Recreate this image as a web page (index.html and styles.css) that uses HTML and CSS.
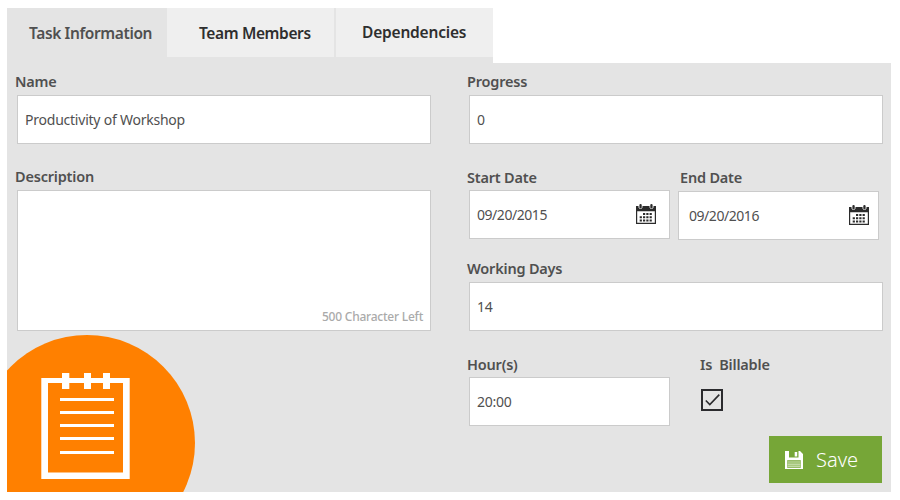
FILE: index.html
```html
<!DOCTYPE html>
<html lang="en">
<head>
<meta charset="utf-8">
<title>Task Information</title>
<link rel="stylesheet" href="styles.css">
</head>
<body>
<svg class="defs" aria-hidden="true">
  <symbol id="calendar" viewBox="0 0 20 20">
    <path fill="#2b2b2b" fill-rule="evenodd" d="M0 2H2.500V3.500Q4.500 6.500 6.500 3.500V2H13.500V3.500Q15.500 6.500 17.500 3.500V2H20V20H0ZM1.200 7.200V18.800H18.800V7.200Z"/>
    <rect x="3.400" y="0" width="2.300" height="4.600" rx="1.100" fill="#2b2b2b"/>
    <rect x="14.300" y="0" width="2.300" height="4.600" rx="1.100" fill="#2b2b2b"/>
    <path stroke="#2b2b2b" stroke-width="2" stroke-dasharray="2.200 1.100" d="M7 10H16.500M3.700 13.200H16.500M3.700 16.400H16.500"/>
  </symbol>
</svg>
<main class="task">
  <nav class="tabs">
    <a class="tab tab-active">Task Information</a>
    <a class="tab tab-team">Team Members</a>
    <a class="tab tab-deps">Dependencies</a>
  </nav>
  <form class="panel">
    <section class="column">
      <div class="field">
        <label class="label">Name</label>
        <div class="box">Productivity of Workshop</div>
      </div>
      <div class="field description">
        <label class="label">Description</label>
        <div class="box area"><span class="hint">500 Character Left</span></div>
      </div>
      <svg class="notepad" width="188" height="157" viewBox="7 335 188 157">
        <circle cx="87" cy="443" r="108" fill="#ff8000"/>
        <path fill="#fff" fill-rule="evenodd" d="M41.300 378H129.700V479H41.300ZM48 383V472.500H123V383Z"/>
        <path fill="#fff" d="M62 373h7.300v16H62zM84 373h7v16h-7zM103 373h7v16h-7z"/>
        <path stroke="#fff" stroke-width="3" d="M60 399.500H114M60 412.500H114M60 425.500H114M60 438.500H114M60 452.500H114"/>
      </svg>
    </section>
    <section class="column">
      <div class="field">
        <label class="label">Progress</label>
        <div class="box">0</div>
      </div>
      <div class="dates">
        <div class="field">
          <label class="label low">Start Date</label>
          <div class="box date">09/20/2015<svg width="20" height="20"><use href="#calendar"/></svg></div>
        </div>
        <div class="field end">
          <label class="label">End Date</label>
          <div class="box date">09/20/2016<svg width="20" height="20"><use href="#calendar"/></svg></div>
        </div>
      </div>
      <div class="field working">
        <label class="label">Working Days</label>
        <div class="box">14</div>
      </div>
      <div class="hours-row">
        <div class="field hours">
          <label class="label low">Hour(s)</label>
          <div class="box">20:00</div>
        </div>
        <div class="billable">
          <label class="label low">Is&nbsp; Billable</label>
          <svg class="check" width="22" height="22" viewBox="0 0 22 22" fill="none" stroke="#2b2b2e" stroke-width="2">
            <rect x="1" y="1" width="20" height="20"/>
            <path stroke-width="1.600" d="M4.800 11.500L8.800 15.600L18.300 5.600"/>
          </svg>
        </div>
      </div>
      <button class="save" type="button">
        <svg width="18" height="18" viewBox="0 0 18 18">
          <path fill="#fff" fill-rule="evenodd" d="M0 0H4V6.500H13.500V0H15L18 3V18H0ZM2.200 9.200V16.800H15.800V9.200Z"/>
          <path fill="#fff" d="M9.700 1h2.500v4.500H9.700z"/>
          <path stroke="#dcebc9" stroke-width="1.200" d="M2.500 11H15.500M2.500 13.100H15.500M2.500 15.200H15.500"/>
        </svg>
        <span>Save</span>
      </button>
    </section>
  </form>
</main>
</body>
</html>
```
FILE: styles.css
```css
* { box-sizing: border-box; }

body {
  margin: 0;
  background: #fff;
  color: #505050;
  font-family: "Noto Sans", "Open Sans", sans-serif;
}

.defs { display: none; }

.task { width: 884px; margin: 8px 0 0 7px; }

.tabs {
  display: flex;
  width: 486px;
  height: 55px;
  padding-bottom: 6px;
  background: #e4e4e4;
}

.tab {
  height: 49px;
  background: #efefef;
  color: #2e2e2e;
  font-size: 15.500px;
  font-weight: 600;
  letter-spacing: -0.380px;
  line-height: 50px;
  white-space: nowrap;
}

.tab-active { width: 160px; padding-left: 22px; background: #e4e4e4; color: #505050; }
.tab-team { width: 167px; padding-left: 32px; }
.tab-deps { width: 157px; margin-left: 2px; padding-left: 26px; letter-spacing: -0.200px; line-height: 48px; }

.panel {
  display: grid;
  grid-template-columns: 414px 414px;
  column-gap: 38px;
  height: 429px;
  padding: 8px 8px 0 10px;
  background: #e4e4e4;
}

.column { display: flex; flex-direction: column; align-items: flex-start; }

.field { width: 414px; }

.label {
  display: block;
  height: 24px;
  margin-left: -2px;
  font-size: 14.500px;
  font-weight: 600;
  letter-spacing: -0.200px;
  line-height: 20px;
  white-space: nowrap;
}

.low { line-height: 22px; }

.box {
  height: 49px;
  padding-left: 7px;
  border: 1px solid #cbcbcb;
  background: #fff;
  font-size: 14px;
  letter-spacing: -0.230px;
  line-height: 48px;
}

.description { margin-top: 22px; }

.area {
  display: flex;
  height: 141px;
  align-items: flex-end;
  justify-content: flex-end;
  padding: 0 7px 5px;
}

.hint { color: #aaa; font-size: 12px; font-weight: 500; line-height: 16px; }

.notepad { flex: none; margin: 4px 0 0 -10px; }

.dates { display: flex; gap: 8px; margin-top: 22px; }
.dates .field { width: 201px; }
.end { padding-top: 1px; }
.end .label { margin-left: 2px; }
.end .box { padding-left: 10px; }
.end .date { padding-right: 9px; }

.date {
  display: flex;
  align-items: center;
  justify-content: space-between;
  padding-right: 13px;
  letter-spacing: -0.450px;
}

.date svg { margin-bottom: 2px; }

.working { margin-top: 18px; }

.hours-row { display: flex; margin-top: 22px; }
.hours { width: 201px; }
.billable { margin-left: 31px; }
.billable .label { margin-left: -1px; }
.check { display: block; margin-top: 12px; }

.save {
  display: flex;
  align-items: center;
  width: 113px;
  height: 47px;
  margin: 10px 0 0 300px;
  padding: 0 0 0 16px;
  border: 0;
  background: #76a637;
  color: #fff;
  font-family: inherit;
  font-size: 20px;
  font-weight: 350;
}

.save span { margin-left: 13px; }
```
